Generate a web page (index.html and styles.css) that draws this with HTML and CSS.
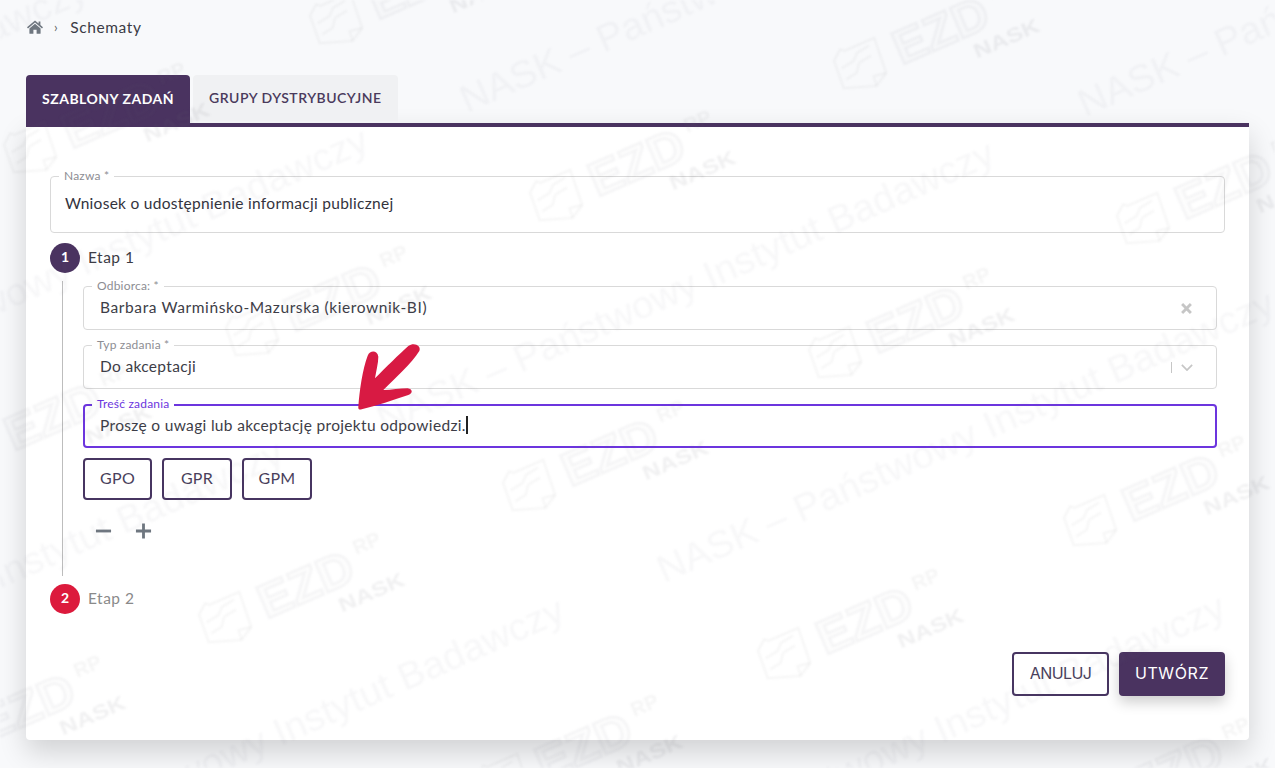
FILE: index.html
```html
<!DOCTYPE html>
<html lang="pl">
<head>
  <meta charset="UTF-8" />
  <title>Schematy</title>
  <link rel="stylesheet" href="styles.css">
</head>
<body>
  <div class="page">
    <nav class="breadcrumb">
      <svg class="home-icon" viewBox="0 0 16 14">
        <path d="M8 0.6 L11.6 3.6 V1.4 H13.4 V5.1 L16 7.3 L15 8.4 L8 2.6 L1 8.4 L0 7.3 Z"/>
        <path d="M8 3.8 L13.6 8.4 V13.2 A0.6 0.6 0 0 1 13 13.8 H9.6 V9.8 H6.4 V13.8 H3 A0.6 0.6 0 0 1 2.4 13.2 V8.4 Z"/>
      </svg>
      <span class="crumb-sep">›</span>
      <span>Schematy</span>
    </nav>

    <div class="tabs">
      <div class="tab active">SZABLONY ZADAŃ</div>
      <div class="tab">GRUPY DYSTRYBUCYJNE</div>
    </div>

    <div class="card">
      <div class="field field-name">
        <span class="field-label">Nazwa *</span>
        Wniosek o udostępnienie informacji publicznej
      </div>

      <div class="step">
        <span class="step-num">1</span>
        <span class="step-title">Etap 1</span>
      </div>

      <div class="step-body">
        <div class="field">
          <span class="field-label">Odbiorca: *</span>
          <span class="field-value wide">Barbara Warmińsko-Mazurska (kierownik-BI)</span>
          <svg class="clear-icon" viewBox="0 0 10 10"><path d="M1 1 L9 9 M9 1 L1 9"/></svg>
        </div>
        <div class="field">
          <span class="field-label">Typ zadania *</span>
          <span class="field-value">Do akceptacji</span>
          <span class="select-sep"></span>
          <svg class="chevron-icon" viewBox="0 0 14 8"><path d="M1 1 L7 7 L13 1"/></svg>
        </div>
        <div class="field focused">
          <span class="field-label">Treść zadania</span>
          <span class="field-value">Proszę o uwagi lub akceptację projektu odpowiedzi.</span><span class="caret"></span>
        </div>

        <div class="tag-row">
          <button class="btn-outline tag">GPO</button>
          <button class="btn-outline tag">GPR</button>
          <button class="btn-outline tag">GPM</button>
        </div>

        <div class="count-row">
          <svg class="count-icon" viewBox="0 0 18 18"><path d="M1 9 H17"/></svg>
          <svg class="count-icon" viewBox="0 0 18 18"><path d="M1 9 H17 M9 1 V17"/></svg>
        </div>
      </div>

      <div class="step step-second">
        <span class="step-num red">2</span>
        <span class="step-title muted">Etap 2</span>
      </div>

      <div class="actions">
        <button class="btn-outline action cancel">ANULUJ</button>
        <button class="action submit">UTWÓRZ</button>
      </div>
    </div>
  </div>

  <svg class="arrow" viewBox="0 0 100 80">
    <path transform="scale(0.3333)" d="M55 215 C58 170 68 100 83 62 C90 45 112 45 115 65 C115 85 108 110 105 130 C140 95 175 60 205 33 C222 20 245 32 238 48 C215 85 165 130 130 165 C155 165 180 160 203 160 C218 162 220 175 205 180 C160 195 110 212 65 223 C58 225 54 222 55 215 Z"/>
  </svg>

  <svg class="watermark" viewBox="0 0 1275 768">
    <defs>
      <g id="wm-logo">
        <g class="wm-doc">
          <path d="M-22 -12 L-12 -20 L-8 -17 L24 -17 L21 20 L7 28 L-24 17 Z"/>
          <path d="M7 28 L8 18 L21 20 M-18 -2 L-4 -4 L2 -10 L16 -12 M-18 10 L-6 8 L0 0 L14 -2"/>
        </g>
        <text class="wm-ezd" x="38" y="19" textLength="100" lengthAdjust="spacingAndGlyphs">EZD</text>
        <text class="wm-nask" x="110" y="43" textLength="70" lengthAdjust="spacingAndGlyphs">NASK</text>
        <text class="wm-rp" x="146" y="-4" textLength="28" lengthAdjust="spacingAndGlyphs">RP</text>
      </g>
      <text id="wm-line" class="wm-text" textLength="670" lengthAdjust="spacingAndGlyphs">NASK – Państwowy Instytut Badawczy</text>
    </defs>

    <use href="#wm-logo" transform="translate(335 18) rotate(-23.5)"/>
    <use href="#wm-logo" transform="translate(29 147) rotate(-23.5)"/>
    <use href="#wm-logo" transform="translate(859 63) rotate(-23.5)"/>
    <use href="#wm-logo" transform="translate(555 195) rotate(-23.5)"/>
    <use href="#wm-logo" transform="translate(251 330) rotate(-23.5)"/>
    <use href="#wm-logo" transform="translate(-29 449) rotate(-23.5)"/>
    <use href="#wm-logo" transform="translate(1142 218) rotate(-23.5)"/>
    <use href="#wm-logo" transform="translate(834 352) rotate(-23.5)"/>
    <use href="#wm-logo" transform="translate(528 485) rotate(-23.5)"/>
    <use href="#wm-logo" transform="translate(224 617) rotate(-23.5)"/>
    <use href="#wm-logo" transform="translate(-55 740) rotate(-23.5)"/>
    <use href="#wm-logo" transform="translate(1089 520) rotate(-23.5)"/>
    <use href="#wm-logo" transform="translate(783 653) rotate(-23.5)"/>
    <use href="#wm-logo" transform="translate(502 779) rotate(-23.5)"/>
    <use href="#wm-logo" transform="translate(1093 802) rotate(-23.5)"/>

    <use href="#wm-line" transform="translate(-523 270) rotate(-23.8)"/>
    <use href="#wm-line" transform="translate(467 113) rotate(-23.8)"/>
    <use href="#wm-line" transform="translate(1085 117) rotate(-23.8)"/>
    <use href="#wm-line" transform="translate(-242 420) rotate(-23.8)"/>
    <use href="#wm-line" transform="translate(384 433) rotate(-23.8)"/>
    <use href="#wm-line" transform="translate(-327 733) rotate(-23.8)"/>
    <use href="#wm-line" transform="translate(664 583) rotate(-23.8)"/>
    <use href="#wm-line" transform="translate(-46 890) rotate(-23.8)"/>
    <use href="#wm-line" transform="translate(615 887) rotate(-23.8)"/>
  </svg>
</body>
</html>
```

FILE: styles.css
```css
body {
  margin: 0;
  height: 768px;
  overflow: hidden;
  position: relative;
  font-family: 'Lato', sans-serif;
  font-size: 15.5px;
  background: #f8f9fb;
  color: #3b3b45;
}

.page {
  padding: 15px 26px 0;
}

.breadcrumb {
  display: flex;
  align-items: center;
  height: 24px;
  margin-bottom: 36px;
  letter-spacing: 0.6px;
}
.home-icon {
  width: 16px;
  height: 14px;
  margin-left: 1px;
  fill: #6f7780;
}
.crumb-sep {
  margin: 0 12px 0 11px;
  color: #666;
  font-size: 13px;
}

.tabs {
  display: flex;
  align-items: flex-start;
  height: 48px;
}
.tab {
  height: 46px;
  line-height: 46px;
  padding: 0 16px;
  margin-right: 3px;
  background: #f0f1f3;
  border-radius: 4px 4px 0 0;
  color: #4a3a5c;
  font-size: 14px;
  font-weight: 600;
  letter-spacing: 0.5px;
}
.tab.active {
  height: 48px;
  line-height: 48px;
  background: #4a3360;
  color: #fff;
  font-weight: 700;
}

.card {
  background: #fff;
  border-top: 4px solid #4a3360;
  border-radius: 0 0 4px 4px;
  padding: 49px 24px 44px;
  box-shadow: 0 12px 28px rgba(0,0,0,0.16);
}

.field {
  position: relative;
  display: flex;
  align-items: center;
  height: 44px;
  box-sizing: border-box;
  margin-bottom: 15px;
  padding: 0 16px 2px;
  border: 1px solid #d9d9d9;
  border-radius: 4px;
  letter-spacing: 0.33px;
}
.field-name {
  height: 57px;
  margin-bottom: 10px;
  padding: 0 14px 3px;
  color: #33333d;
  letter-spacing: 0.28px;
}
.field-label {
  position: absolute;
  top: -8px;
  left: 8px;
  padding: 0 5px;
  background: #fff;
  color: #8d8d93;
  font-size: 12px;
  line-height: 13px;
  letter-spacing: 0.2px;
}
.field-value {
  color: #3d3d47;
}
.field-value.wide {
  letter-spacing: 0.6px;
}
.clear-icon {
  position: absolute;
  right: 24px;
  top: 16px;
  width: 11px;
  height: 11px;
  fill: none;
  stroke: #c6c6c6;
  stroke-width: 2.6;
}
.select-sep {
  position: absolute;
  right: 44px;
  top: 16px;
  width: 1px;
  height: 11px;
  background: #c6c6c6;
}
.chevron-icon {
  position: absolute;
  right: 23px;
  top: 18px;
  width: 12px;
  height: 7px;
  fill: none;
  stroke: #c6c6c6;
  stroke-width: 2;
}

.field.focused {
  margin-bottom: 10px;
  border: 2px solid #6c35de;
  padding: 0 15px 2px;
}
.field.focused .field-label {
  top: -9px;
  left: 7px;
  color: #6c35de;
}
.caret {
  width: 2px;
  height: 18px;
  background: #222;
}

.step {
  display: flex;
  align-items: center;
  height: 30px;
}
.step-num {
  width: 30px;
  height: 30px;
  line-height: 28px;
  margin-right: 8px;
  border-radius: 50%;
  background: #4a3360;
  color: #fff;
  font-size: 14px;
  font-weight: 700;
  text-align: center;
}
.step-num.red {
  background: #dc1a3c;
}
.step-title {
  padding-bottom: 2px;
  letter-spacing: 0.5px;
}
.step-title.muted {
  color: #8a8a8a;
}
.step-second {
  margin-top: 8px;
}

.step-body {
  margin: 8px 8px 0 12px;
  padding: 5px 0 36px 20px;
  border-left: 1px solid #bdbdbd;
}

.btn-outline {
  background: #fff;
  border: 2px solid #473561;
  border-radius: 4px;
  color: #4a3f5c;
  font-family: inherit;
}

.tag-row {
  display: flex;
  gap: 10px;
}
.tag {
  width: 70px;
  height: 42px;
  padding: 0 0 3px;
  font-size: 16px;
  letter-spacing: 0.3px;
}
.tag:first-child {
  width: 69px;
}

.count-row {
  display: flex;
  gap: 23px;
  margin: 22px 0 0 12px;
}
.count-icon {
  width: 17px;
  height: 18px;
  fill: none;
  stroke: #6f7780;
  stroke-width: 3;
}

.actions {
  display: flex;
  justify-content: flex-end;
  gap: 10px;
  margin-top: 38px;
}
.action {
  height: 44px;
  font-family: 'Inter', sans-serif;
  font-size: 16px;
  border-radius: 4px;
}
.cancel {
  width: 97px;
  padding: 0 0 2px;
  letter-spacing: -0.6px;
}
.submit {
  width: 106px;
  padding: 0 0 2px;
  border: none;
  background: #4a3360;
  color: #fff;
  letter-spacing: 0.6px;
  box-shadow: 0 6px 14px rgba(0,0,0,0.2);
}

/* red pointer drawn over the form */
.arrow {
  position: absolute;
  left: 340px;
  top: 335px;
  width: 100px;
  height: 80px;
  fill: #d81a43;
}

.watermark {
  position: absolute;
  left: 0;
  top: 0;
  width: 1275px;
  height: 768px;
  pointer-events: none;
  filter: blur(0.8px);
}
.watermark text {
  font-family: 'Liberation Sans', sans-serif;
}
.wm-text {
  font-size: 38px;
  fill: rgba(110,110,120,0.055);
}
.wm-doc path {
  fill: none;
  stroke: rgba(110,110,120,0.07);
  stroke-width: 2;
}
.wm-ezd {
  font-size: 48px;
  font-weight: 700;
  fill: rgba(110,110,120,0.012);
  stroke: rgba(110,110,120,0.065);
  stroke-width: 2.5;
}
.wm-nask {
  font-size: 20px;
  font-weight: 700;
  fill: rgba(110,110,120,0.1);
}
.wm-rp {
  font-size: 20px;
  font-weight: 700;
  fill: rgba(110,110,120,0.07);
}
```
